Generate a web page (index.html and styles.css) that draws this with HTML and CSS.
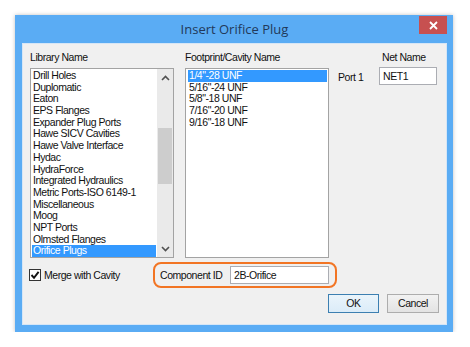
FILE: index.html
```html
<!DOCTYPE html>
<html lang="en">
<head>
    <meta charset="UTF-8">
    <title>Insert Orifice Plug</title>
    <link rel="stylesheet" href="styles.css">
</head>
<body>
    <div class="dialog">
        <div class="titlebar">
            <div class="title">Insert Orifice Plug</div>
            <div class="close">
                <svg width="9" height="9" viewBox="0 0 9 9"><path d="M1 1 L8 8 M8 1 L1 8" stroke="#fff" stroke-width="1.8"/></svg>
            </div>
        </div>
        <div class="panel">
            <div class="columns">
                <div class="col">
                    <div class="label">Library Name</div>
                    <div class="listbox">
                        <div class="items">
                            <div class="item">Drill Holes</div>
                            <div class="item">Duplomatic</div>
                            <div class="item">Eaton</div>
                            <div class="item">EPS Flanges</div>
                            <div class="item">Expander Plug Ports</div>
                            <div class="item">Hawe SICV Cavities</div>
                            <div class="item">Hawe Valve Interface</div>
                            <div class="item">Hydac</div>
                            <div class="item">HydraForce</div>
                            <div class="item">Integrated Hydraulics</div>
                            <div class="item">Metric Ports-ISO 6149-1</div>
                            <div class="item">Miscellaneous</div>
                            <div class="item">Moog</div>
                            <div class="item">NPT Ports</div>
                            <div class="item">Olmsted Flanges</div>
                            <div class="item selected">Orifice Plugs</div>
                        </div>
                        <div class="scrollbar">
                            <div class="arrow">
                                <svg width="9" height="6" viewBox="0 0 9 6"><path d="M1 5 L4.5 1.5 L8 5" fill="none" stroke="#505050" stroke-width="1.6"/></svg>
                            </div>
                            <div class="track"><div class="thumb"></div></div>
                            <div class="arrow">
                                <svg width="9" height="6" viewBox="0 0 9 6"><path d="M1 1 L4.5 4.5 L8 1" fill="none" stroke="#505050" stroke-width="1.6"/></svg>
                            </div>
                        </div>
                    </div>
                </div>
                <div class="col">
                    <div class="label">Footprint/Cavity Name</div>
                    <div class="listbox">
                        <div class="items wide">
                            <div class="item selected">1/4"-28 UNF</div>
                            <div class="item">5/16"-24 UNF</div>
                            <div class="item">5/8"-18 UNF</div>
                            <div class="item">7/16"-20 UNF</div>
                            <div class="item">9/16"-18 UNF</div>
                        </div>
                    </div>
                </div>
                <div class="ports">
                    <div></div>
                    <div class="label net">Net Name</div>
                    <div class="port">Port 1</div>
                    <div class="textbox">NET1</div>
                </div>
            </div>

            <div class="options">
                <div class="check">
                    <div class="box">
                        <svg width="10" height="10" viewBox="0 0 10 10"><path d="M1.5 5 L4 7.8 L8.6 1.8" fill="none" stroke="#111" stroke-width="1.9"/></svg>
                    </div>
                    <span>Merge with Cavity</span>
                </div>
                <div class="highlight">
                    <span>Component ID</span>
                    <div class="textbox id">2B-Orifice</div>
                </div>
            </div>

            <div class="buttons">
                <div class="button default">OK</div>
                <div class="button">Cancel</div>
            </div>
        </div>
    </div>
</body>
</html>
```
FILE: styles.css
```css
*, *:before, *:after {
    box-sizing: border-box;
}

body {
    margin: 0;
    background: #fff;
    font-family: 'Liberation Sans', Arial, sans-serif;
    font-size: 10.5px;
    letter-spacing: -0.45px;
    color: #111;
}

.dialog {
    margin: 15px 0 0 15px;
    width: 438px;
    height: 317px;
    padding: 0 6px 7px 7px;
    background: #5aacf4;
    box-shadow: 0 0 4px rgba(0, 0, 0, 0.25);
    display: flex;
    flex-direction: column;
}

.titlebar {
    height: 28px;
    display: flex;
    align-items: flex-start;
    position: relative;
}

.title {
    flex: 1;
    text-align: center;
    font-family: 'Open Sans', sans-serif;
    font-size: 13px;
    letter-spacing: 0;
    line-height: 29px;
    color: #22395a;
}

.close {
    position: absolute;
    right: 0;
    top: 1px;
    width: 28px;
    height: 18px;
    background: #c75050;
    display: flex;
    justify-content: center;
    align-items: center;
}

.panel {
    flex: 1;
    background: #f0f0f0;
    border: 1px solid #d6e6f6;
    display: flex;
    flex-direction: column;
}

.columns {
    display: flex;
    padding: 7px 0 0 7px;
}

.col {
    width: 144px;
    margin-right: 11px;
}

.label {
    line-height: 12px;
    height: 12px;
    margin-bottom: 5px;
    white-space: nowrap;
}

.listbox {
    height: 190px;
    background: #fff;
    border: 1px solid #a3a3a3;
    display: flex;
}

.items {
    flex: 1;
    padding: 1px 1px 0 1px;
}

.items.wide {
    padding: 1px 1px 0 2px;
}

.item {
    line-height: 11.7px;
    height: 11.7px;
    padding-left: 1px;
    white-space: nowrap;
}

.item.selected {
    background: #3399ff;
    color: #fff;
}

.scrollbar {
    width: 16px;
    background: #eaeaea;
    display: flex;
    flex-direction: column;
}

.arrow {
    height: 17px;
    display: flex;
    justify-content: center;
    align-items: center;
}

.track {
    flex: 1;
}

.thumb {
    margin: 42px 1px 0 1px;
    height: 56px;
    background: #cdcdcd;
}

.ports {
    display: grid;
    grid-template-columns: 41px 58px;
    grid-template-rows: 16px 18px;
    margin-left: -2px;
    align-items: center;
}

.label.net {
    padding-left: 3px;
    margin-bottom: 0;
    align-self: start;
}

.port {
    padding-top: 2px;
}

.textbox {
    height: 18px;
    background: #fff;
    border: 1px solid #abadb3;
    padding: 0 3px;
    line-height: 16px;
    white-space: nowrap;
}

.options {
    display: flex;
    align-items: center;
    margin-top: 4px;
    padding-left: 6px;
}

.check {
    width: 124px;
    display: flex;
    align-items: center;
}

.box {
    width: 12px;
    height: 12px;
    background: #fff;
    border: 1px solid #333;
    display: flex;
    justify-content: center;
    align-items: center;
    margin-right: 3px;
}

.highlight {
    width: 184px;
    height: 26px;
    border: 2px solid #f27524;
    border-radius: 8px;
    display: flex;
    align-items: center;
    justify-content: space-between;
    padding: 0 6px 0 5px;
    white-space: nowrap;
}

.textbox.id {
    width: 99px;
}

.buttons {
    display: flex;
    justify-content: flex-end;
    gap: 8px;
    margin-top: 6px;
    padding-right: 7px;
}

.button {
    width: 52px;
    height: 19px;
    border: 1px solid #adadad;
    background: linear-gradient(#f2f2f2, #e3e3e3);
    text-align: center;
    line-height: 17px;
}

.button.default {
    width: 51px;
    border-color: #3c7fb1;
    background: linear-gradient(#eaf4fb, #dbecf8);
}
```
